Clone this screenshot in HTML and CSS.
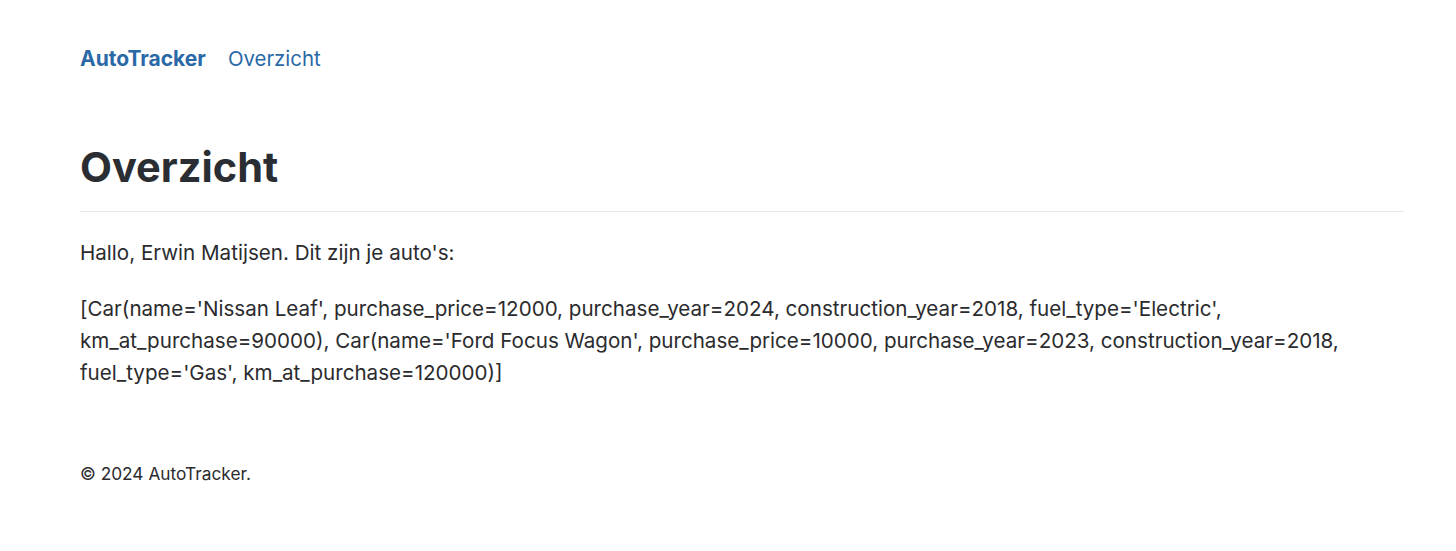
FILE: index.html
```html
<!DOCTYPE html>
<html lang="nl">
<head>
<meta charset="utf-8">
<title>AutoTracker</title>
<link rel="stylesheet" href="styles.css">
</head>
<body>
<div class="container">
  <nav class="nav">
    <a class="brand" href="#">AutoTracker</a>
    <a class="nav-link" href="#">Overzicht</a>
  </nav>
  <main class="main">
    <h1 class="title">Overzicht</h1>
    <p class="greeting">Hallo, Erwin Matijsen. Dit zijn je auto's:</p>
    <p class="cars">[Car(name='Nissan Leaf', purchase_price=12000, purchase_year=2024, construction_year=2018, fuel_type='Electric', km_at_purchase=90000), Car(name='Ford Focus Wagon', purchase_price=10000, purchase_year=2023, construction_year=2018, fuel_type='Gas', km_at_purchase=120000)]</p>
  </main>
  <footer class="footer">© 2024 AutoTracker.</footer>
</div>
</body>
</html>
```
FILE: styles.css
```css
html, body {
  margin: 0;
  padding: 0;
  background: #ffffff;
}
body {
  font-family: Inter, "Noto Sans", sans-serif;
  color: #2b2b2e;
}
.container {
  padding: 0 52px 0 80px;
}
.nav {
  display: flex;
  align-items: center;
  gap: 22px;
  height: 48px;
  padding-top: 34px;
}
.brand {
  font-size: 21px;
  font-weight: 700;
  color: #2a68a6;
  text-decoration: none;
}
.nav-link {
  font-size: 20.4px;
  color: #2a68a6;
  text-decoration: none;
}
.main {
  padding-top: 57px;
}
.title {
  margin: 0;
  font-size: 41.5px;
  font-weight: 700;
  color: #2a2d32;
  line-height: 56px;
  padding-bottom: 16px;
  border-bottom: 1px solid #e8e9eb;
}
.greeting {
  margin: 25px 0 0;
  font-size: 20.6px;
  line-height: 32px;
}
.cars {
  margin: 24px 0 0;
  font-size: 20.6px;
  line-height: 32px;
}
.footer {
  margin-top: 73px;
  font-size: 17.3px;
  line-height: 24px;
}
```
